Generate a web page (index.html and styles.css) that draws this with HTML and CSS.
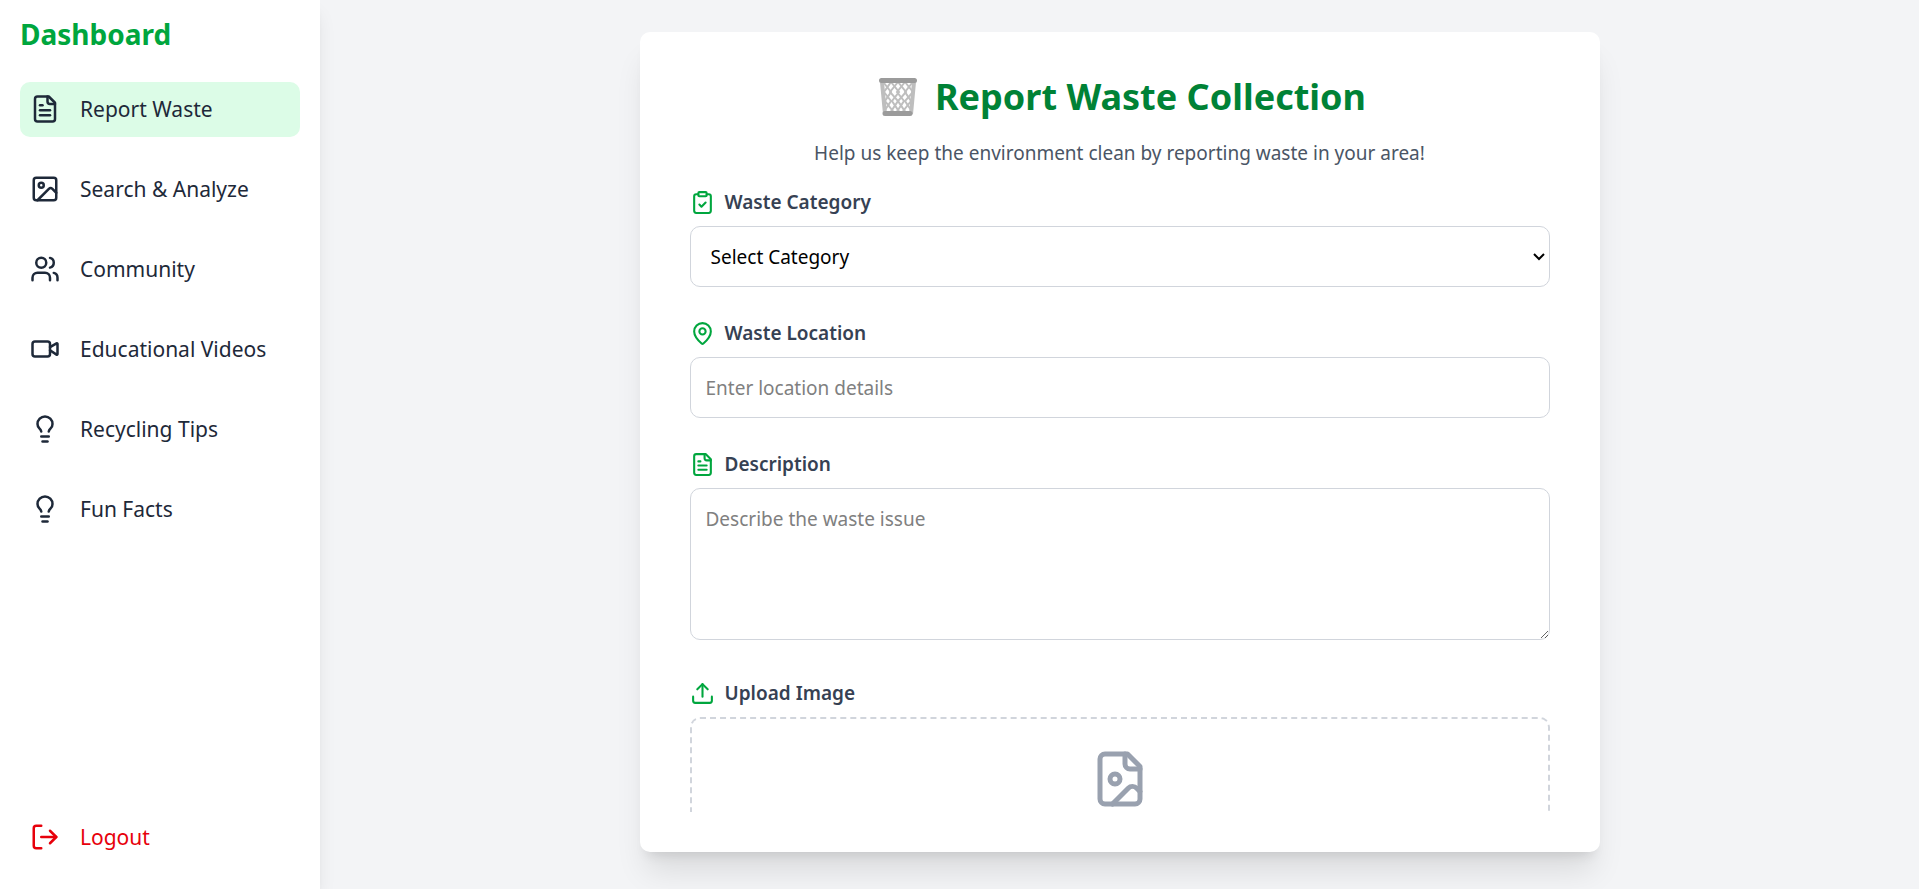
FILE: index.html
```html
<!DOCTYPE html>
<html lang="en">
<head>
<meta charset="utf-8">
<meta name="viewport" content="width=device-width, initial-scale=1">
<title>Report Waste Collection</title>
<link rel="stylesheet" href="styles.css">
</head>
<body>
<div class="layout">
  <aside class="sidebar">
    <h2 class="brand">Dashboard</h2>
    <nav class="nav">
      <a class="nav-item active" href="#report">
        <svg class="icon" viewBox="0 0 24 24"><path d="M15 2H6a2 2 0 0 0-2 2v16a2 2 0 0 0 2 2h12a2 2 0 0 0 2-2V7Z"/><path d="M14 2v4a2 2 0 0 0 2 2h4"/><path d="M10 9H8"/><path d="M16 13H8"/><path d="M16 17H8"/></svg>
        <span>Report Waste</span>
      </a>
      <a class="nav-item" href="#search">
        <svg class="icon" viewBox="0 0 24 24"><rect x="3" y="3" width="18" height="18" rx="2"/><circle cx="9" cy="9" r="2"/><path d="m21 15-3.086-3.086a2 2 0 0 0-2.828 0L6 21"/></svg>
        <span>Search &amp; Analyze</span>
      </a>
      <a class="nav-item" href="#community">
        <svg class="icon" viewBox="0 0 24 24"><path d="M16 21v-2a4 4 0 0 0-4-4H6a4 4 0 0 0-4 4v2"/><circle cx="9" cy="7" r="4"/><path d="M22 21v-2a4 4 0 0 0-3-3.87"/><path d="M16 3.13a4 4 0 0 1 0 7.75"/></svg>
        <span>Community</span>
      </a>
      <a class="nav-item" href="#videos">
        <svg class="icon" viewBox="0 0 24 24"><path d="m16 13 5.223 3.482a.5.5 0 0 0 .777-.416V7.87a.5.5 0 0 0-.752-.432L16 10.5"/><rect x="2" y="6" width="14" height="12" rx="2"/></svg>
        <span>Educational Videos</span>
      </a>
      <a class="nav-item" href="#tips">
        <svg class="icon" viewBox="0 0 24 24"><path d="M15 14c.2-1 .7-1.7 1.5-2.5 1-.9 1.5-2.2 1.5-3.5A6 6 0 0 0 6 8c0 1 .2 2.2 1.5 3.5.7.7 1.3 1.5 1.5 2.5"/><path d="M9 18h6"/><path d="M10 22h4"/></svg>
        <span>Recycling Tips</span>
      </a>
      <a class="nav-item" href="#facts">
        <svg class="icon" viewBox="0 0 24 24"><path d="M15 14c.2-1 .7-1.7 1.5-2.5 1-.9 1.5-2.2 1.5-3.5A6 6 0 0 0 6 8c0 1 .2 2.2 1.5 3.5.7.7 1.3 1.5 1.5 2.5"/><path d="M9 18h6"/><path d="M10 22h4"/></svg>
        <span>Fun Facts</span>
      </a>
    </nav>
    <button class="nav-item logout" type="button">
      <svg class="icon" viewBox="0 0 24 24"><path d="M9 21H5a2 2 0 0 1-2-2V5a2 2 0 0 1 2-2h4"/><path d="m16 17 5-5-5-5"/><path d="M21 12H9"/></svg>
      <span>Logout</span>
    </button>
  </aside>

  <main class="main">
    <section class="card">
      <div class="card-scroll">
        <h1 class="title">
          <svg class="bin" viewBox="0 0 50 50">
            <g fill="none" stroke="#bebebe" stroke-width="2">
              <path d="M11 11l7 9-6 9 7 9-3 4M18 10l8 10-7 9 6 9-3 4M25 10l8 10-8 9 6 9-3 4M32 10l8 10-8 9 6 9"/>
              <path d="M39 11l-7 9 6 9-7 9 3 4M32 10l-8 10 7 9-6 9 3 4M25 10l-8 10 8 9-6 9 3 4M18 10l-7 10 7 9-6 9"/>
            </g>
            <path d="M9 10l3 32M41 10l-3 32" fill="none" stroke="#bebebe" stroke-width="4"/>
            <path d="M8.500 8.500h33M12 41.500h25" fill="none" stroke="#9b9b9b" stroke-width="5" stroke-linecap="round"/>
          </svg>
          <span>Report Waste Collection</span>
        </h1>
        <p class="subtitle">Help us keep the environment clean by reporting waste in your area!</p>

        <form class="form">
          <div class="field">
            <label class="label" for="category">
              <svg class="icon" viewBox="0 0 24 24"><rect x="8" y="2" width="8" height="4" rx="1"/><path d="M16 4h2a2 2 0 0 1 2 2v14a2 2 0 0 1-2 2H6a2 2 0 0 1-2-2V6a2 2 0 0 1 2-2h2"/><path d="m9 14 2 2 4-4"/></svg>
              Waste Category
            </label>
            <select class="control select" id="category">
              <option>Select Category</option>
            </select>
          </div>
          <div class="field">
            <label class="label" for="location">
              <svg class="icon" viewBox="0 0 24 24"><path d="M20 10c0 4.993-5.539 10.193-7.399 11.799a1 1 0 0 1-1.202 0C9.539 20.193 4 14.993 4 10a8 8 0 0 1 16 0"/><circle cx="12" cy="10" r="3"/></svg>
              Waste Location
            </label>
            <input class="control" id="location" type="text" placeholder="Enter location details">
          </div>
          <div class="field">
            <label class="label" for="description">
              <svg class="icon" viewBox="0 0 24 24"><path d="M15 2H6a2 2 0 0 0-2 2v16a2 2 0 0 0 2 2h12a2 2 0 0 0 2-2V7Z"/><path d="M14 2v4a2 2 0 0 0 2 2h4"/><path d="M10 9H8"/><path d="M16 13H8"/><path d="M16 17H8"/></svg>
              Description
            </label>
            <textarea class="control description" id="description" rows="4" placeholder="Describe the waste issue"></textarea>
          </div>
          <div class="field">
            <label class="label" for="upload">
              <svg class="icon" viewBox="0 0 24 24"><path d="M21 15v4a2 2 0 0 1-2 2H5a2 2 0 0 1-2-2v-4"/><path d="m17 8-5-5-5 5"/><path d="M12 3v12"/></svg>
              Upload Image
            </label>
            <label class="dropzone" for="upload">
              <svg class="icon" viewBox="0 0 24 24"><path d="M15 2H6a2 2 0 0 0-2 2v16a2 2 0 0 0 2 2h12a2 2 0 0 0 2-2V7Z"/><path d="M14 2v4a2 2 0 0 0 2 2h4"/><circle cx="10" cy="12" r="2"/><path d="m20 17-1.296-1.296a2.41 2.41 0 0 0-3.408 0L9 22"/></svg>
              <input id="upload" type="file" accept="image/*" hidden>
            </label>
          </div>
        </form>
      </div>
    </section>
  </main>
</div>
</body>
</html>
```

FILE: styles.css
```css
*,
*::before,
*::after {
  box-sizing: border-box;
}

body {
  margin: 0;
  font-family: "Segoe UI", "Noto Sans", "Open Sans", sans-serif;
  font-size: 19px;
  line-height: 30px;
  background: #f3f4f6;
}

h1,
h2,
p {
  margin: 0;
}

.icon {
  flex: none;
  fill: none;
  stroke: currentColor;
  stroke-width: 2;
  stroke-linecap: round;
  stroke-linejoin: round;
}

.layout {
  display: flex;
  height: 100vh;
}

/* Sidebar */
.sidebar {
  display: flex;
  flex-direction: column;
  flex: none;
  width: 320px;
  padding: 14px 20px 24px;
  background: #fff;
  box-shadow: 0 12px 19px -4px rgba(0, 0, 0, 0.1), 0 5px 8px -5px rgba(0, 0, 0, 0.1);
}

.brand {
  margin-bottom: 28px;
  font-size: 28px;
  line-height: 40px;
  font-weight: 700;
  color: #00a63e;
}

.nav {
  display: flex;
  flex-direction: column;
  flex: 1;
  gap: 25px;
}

.nav-item {
  display: flex;
  align-items: center;
  gap: 20px;
  height: 55px;
  padding: 0 10px 2px;
  border: 0;
  border-radius: 10px;
  background: none;
  font: inherit;
  font-size: 21px;
  color: #1e2939;
  text-decoration: none;
  cursor: pointer;
}

.nav-item .icon {
  width: 30px;
  height: 30px;
}

.nav-item.active {
  background: #dcfce7;
}

.nav-item.logout {
  color: #e7000b;
}

/* Report card */
.main {
  display: flex;
  flex: 1;
  justify-content: center;
  min-width: 0;
  padding: 32px 32px 37px;
}

.card {
  display: flex;
  width: 100%;
  max-width: 960px;
  padding: 40px 50px;
  border-radius: 10px;
  background: #fff;
  box-shadow: 0 25px 31px -6px rgba(0, 0, 0, 0.1), 0 10px 12px -7px rgba(0, 0, 0, 0.1);
}

.card-scroll {
  flex: 1;
  min-width: 0;
  overflow-y: auto;
  scrollbar-width: none;
}

.title {
  display: flex;
  align-items: center;
  justify-content: center;
  gap: 12px;
  font-size: 36px;
  line-height: 50px;
  font-weight: 700;
  color: #008236;
}

.bin {
  flex: none;
  width: 50px;
  height: 50px;
}

.subtitle {
  margin: 16px 0 19px;
  text-align: center;
  color: #4a5565;
}

.form {
  display: flex;
  flex-direction: column;
  gap: 31px;
}

.field {
  display: flex;
  flex-direction: column;
  gap: 9px;
}

.label {
  display: flex;
  align-items: center;
  gap: 10px;
  font-weight: 600;
  color: #364153;
}

.label .icon {
  width: 25px;
  height: 25px;
  color: #00a63e;
}

.control {
  width: 100%;
  height: 61px;
  padding: 15px;
  border: 1px solid #d1d5dc;
  border-radius: 10px;
  background: #fff;
  font: inherit;
  color: #000;
}

.control::placeholder {
  color: #808080;
}

.control.select {
  padding: 15px 20px;
  appearance: none;
  background: #fff url("data:image/svg+xml,%3Csvg xmlns='http://www.w3.org/2000/svg' width='12' height='8' viewBox='0 0 12 8'%3E%3Cpath d='M1 1l5 5 5-5' fill='none' stroke='%23000' stroke-width='2'/%3E%3C/svg%3E") no-repeat right 4px center;
}

.control.description {
  height: 152px;
  margin-bottom: 7px;
  resize: both;
}

.dropzone {
  display: flex;
  justify-content: center;
  padding: 30px;
  border: 2px dashed #d1d5dc;
  border-radius: 10px;
  color: #99a1af;
  cursor: pointer;
}

.dropzone .icon {
  width: 60px;
  height: 60px;
}
```
